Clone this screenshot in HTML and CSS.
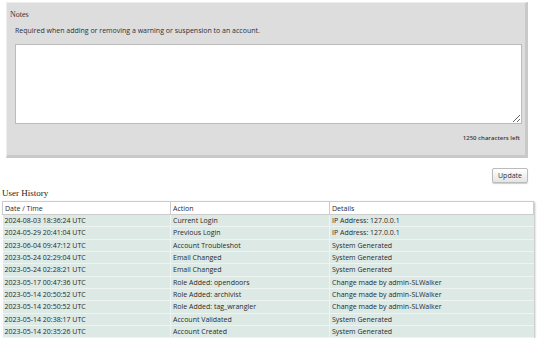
FILE: index.html
```html
<!DOCTYPE html>
<html>
<head>
<meta charset="utf-8">
<link rel="stylesheet" href="styles.css">
</head>
<body>
<div class="notes-box">
  <div class="legend">Notes</div>
  <p class="hint">Required when adding or removing a warning or suspension to an account.</p>
  <textarea class="notes-input"></textarea>
  <p class="count">1250 characters left</p>
</div>
<div class="actions"><button class="btn">Update</button></div>
<h3 class="heading">User History</h3>
<table class="history">
  <thead>
    <tr><th class="c1">Date / Time</th><th class="c2">Action</th><th class="c3">Details</th></tr>
  </thead>
  <tbody>
    <tr><td>2024-08-03 18:36:24 UTC</td><td>Current Login</td><td>IP Address: 127.0.0.1</td></tr>
    <tr><td>2024-05-29 20:41:04 UTC</td><td>Previous Login</td><td>IP Address: 127.0.0.1</td></tr>
    <tr><td>2023-06-04 09:47:12 UTC</td><td>Account Troubleshot</td><td>System Generated</td></tr>
    <tr><td>2023-05-24 02:29:04 UTC</td><td>Email Changed</td><td>System Generated</td></tr>
    <tr><td>2023-05-24 02:28:21 UTC</td><td>Email Changed</td><td>System Generated</td></tr>
    <tr><td>2023-05-17 00:47:36 UTC</td><td>Role Added: opendoors</td><td>Change made by admin-SLWalker</td></tr>
    <tr><td>2023-05-14 20:50:52 UTC</td><td>Role Added: archivist</td><td>Change made by admin-SLWalker</td></tr>
    <tr><td>2023-05-14 20:50:52 UTC</td><td>Role Added: tag_wrangler</td><td>Change made by admin-SLWalker</td></tr>
    <tr><td>2023-05-14 20:38:17 UTC</td><td>Account Validated</td><td>System Generated</td></tr>
    <tr><td>2023-05-14 20:35:26 UTC</td><td>Account Created</td><td>System Generated</td></tr>
  </tbody>
</table>
</body>
</html>
```
FILE: styles.css
```css
html, body {
  margin: 0;
  padding: 0;
  background: #fff;
}
body {
  padding: 2px 6px 0 2px;
  font-family: "Open Sans", "Liberation Sans", Arial, sans-serif;
  font-size: 7px;
  color: #2a2a2a;
}
.notes-box {
  margin-left: 4px;
  width: 522px;
  height: 156px;
  box-sizing: border-box;
  background: #ddd;
  border: 1px solid #eee;
  border-right: 3px solid #c9c9c9;
  border-bottom: 3px solid #c9c9c9;
  padding: 7px 3px 0 3px;
}
.legend {
  font-family: "Liberation Serif", "Times New Roman", serif;
  font-size: 8px;
  color: #333;
  line-height: 10px;
}
.hint {
  margin: 6px 0 0 5px;
  line-height: 10px;
  color: #2a3140;
}
.notes-input {
  display: block;
  margin: 8px 0 0 5px;
  width: 507px;
  height: 80px;
  box-sizing: border-box;
  border: 1px solid #bbb;
  background: #fff;
  resize: vertical;
}
.count {
  margin: 9px 2px 0 0;
  text-align: right;
  font-size: 6px;
  font-weight: 600;
  line-height: 10px;
  color: #3a3a3a;
}
.actions {
  display: flex;
  justify-content: flex-end;
  margin-top: 10px;
  width: 526px;
}
.btn {
  font-family: "Open Sans", "Liberation Sans", Arial, sans-serif;
  font-size: 7px;
  color: #333;
  height: 15px;
  padding: 0 5px;
  background: linear-gradient(#fff, #e4e4e4);
  border: 1px solid #bbb;
  border-radius: 2px;
  box-shadow: 0 1px 1px #ccc;
}
.heading {
  margin: 5px 0 0 0;
  font-family: "Liberation Serif", "Times New Roman", serif;
  font-weight: normal;
  font-size: 9px;
  line-height: 11px;
  color: #222;
}
.history {
  margin-top: 2px;
  width: 532px;
  border-collapse: collapse;
  box-shadow: 1px 1px 2px #bbb;
}
.history th {
  text-align: left;
  font-weight: normal;
  background: #fff;
  border: 1px solid #ccc;
  height: 12px;
  padding: 0 2px;
  line-height: 11px;
}
.history .c1 { width: 163px; }
.history .c2 { width: 154px; }
.history td {
  background: #dde9e4;
  height: 11.33px;
  padding: 0 2px;
  line-height: 11px;
  border-bottom: 1px solid #eef4f1;
  border-left: 1px solid #eef4f1;
  white-space: nowrap;
}
.history td:first-child { border-left: 0; }
```
